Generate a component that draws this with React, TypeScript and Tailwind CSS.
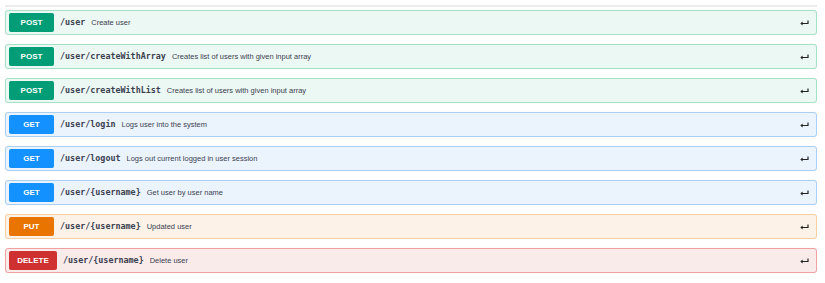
import React from "react";

type Method = "POST" | "GET" | "PUT" | "DELETE";

const styles: Record<Method, { row: string; badge: string }> = {
  POST: { row: "border-[#a3e2c6] bg-[#ecf8f3]", badge: "bg-[#009d77]" },
  GET: { row: "border-[#a9cff4] bg-[#ebf4fd]", badge: "bg-[#1391ff]" },
  PUT: { row: "border-[#f6d0a2] bg-[#fdf2e8]", badge: "bg-[#e97500]" },
  DELETE: { row: "border-[#f0a0a0] bg-[#faebeb]", badge: "bg-[#cf3030]" },
};

const ops: { method: Method; path: string; summary: string }[] = [
  { method: "POST", path: "/user", summary: "Create user" },
  { method: "POST", path: "/user/createWithArray", summary: "Creates list of users with given input array" },
  { method: "POST", path: "/user/createWithList", summary: "Creates list of users with given input array" },
  { method: "GET", path: "/user/login", summary: "Logs user into the system" },
  { method: "GET", path: "/user/logout", summary: "Logs out current logged in user session" },
  { method: "GET", path: "/user/{username}", summary: "Get user by user name" },
  { method: "PUT", path: "/user/{username}", summary: "Updated user" },
  { method: "DELETE", path: "/user/{username}", summary: "Delete user" },
];

function EnterIcon() {
  return (
    <svg width="9" height="6" viewBox="0 0 9 6" className="shrink-0">
      <path d="M8 0.5 V3.5 H1.8" stroke="#222" strokeWidth="1.2" fill="none" />
      <path d="M0.3 3.5 L2.6 1.4 V5.6 Z" fill="#222" />
    </svg>
  );
}

export default function App() {
  return (
    <div className="w-[825px] h-[283px] bg-white pl-[5px] pr-[8px] pt-[5px] font-['Liberation_Sans',Arial,sans-serif]">
      <div className="h-[2px] bg-[#ececec]" />
      <div className="mt-[3px] flex flex-col gap-[9px]">
        {ops.map((op, i) => (
          <div
            key={i}
            className={`flex h-[25px] items-center rounded-[3px] border pl-[3px] pr-[7px] shadow-[0_0_1px_rgba(0,0,0,0.08)] ${styles[op.method].row}`}
          >
            <div
              className={`flex h-[19px] items-center justify-center rounded-[2px] px-[8px] text-[8px] font-bold text-white ${styles[op.method].badge} ${op.method === "DELETE" ? "min-w-[48px]" : "min-w-[45px]"}`}
            >
              {op.method}
            </div>
            <span className="ml-[6px] font-['DejaVu_Sans_Mono',monospace] text-[8.4px] font-bold text-[#3b4151]">
              {op.path}
            </span>
            <span className="ml-[6px] flex-1 text-[7.5px] text-[#3b4151]">{op.summary}</span>
            <EnterIcon />
          </div>
        ))}
      </div>
    </div>
  );
}
